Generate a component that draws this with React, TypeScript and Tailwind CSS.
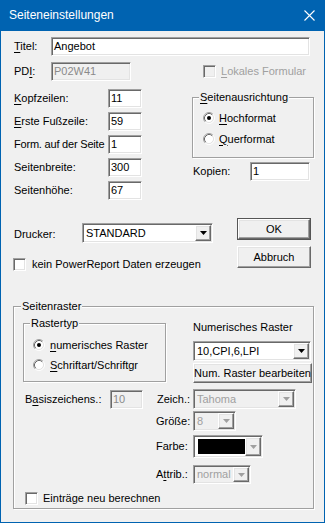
import React from "react";

const sunken =
  "border border-t-[#a0a0a0] border-l-[#a0a0a0] border-b-white border-r-white shadow-[inset_1px_1px_0_#696969,inset_-1px_-1px_0_#e3e3e3]";
const raised =
  "border border-t-white border-l-white border-b-[#696969] border-r-[#696969] shadow-[inset_-1px_-1px_0_#a0a0a0,inset_1px_1px_0_#e3e3e3] bg-[#f0f0f0]";
const etched =
  "relative border border-[#a0a0a0] shadow-[inset_1px_1px_0_#ffffff,1px_1px_0_#ffffff]";

function U({ children }: { children: React.ReactNode }) {
  return <span className="underline underline-offset-[2px]">{children}</span>;
}

function Field({
  className,
  text,
  disabled,
}: {
  className: string;
  text: string;
  disabled?: boolean;
}) {
  return (
    <div
      className={`${sunken} ${className} ${
        disabled ? "bg-[#f0f0f0] text-[#8a8a8a]" : "bg-white text-black"
      } flex items-center p-[1px] pl-[2px] shrink-0`}
    >
      <span className="leading-[13px]">{text}</span>
    </div>
  );
}

function Arrow({ disabled }: { disabled?: boolean }) {
  return (
    <svg width="7" height="4" viewBox="0 0 7 4">
      <path d="M0 0h7L3.5 4z" fill={disabled ? "#a0a0a0" : "#000"} />
    </svg>
  );
}

function Combo({
  className,
  text,
  disabled,
  arrowDisabled,
  children,
}: {
  className: string;
  text?: string;
  disabled?: boolean;
  arrowDisabled?: boolean;
  children?: React.ReactNode;
}) {
  return (
    <div
      className={`${sunken} ${className} ${
        disabled ? "bg-[#f0f0f0] text-[#a0a0a0]" : "bg-white text-black"
      } flex items-stretch p-[1px] shrink-0`}
    >
      <div className="flex-1 flex items-center pl-[2px] overflow-hidden whitespace-nowrap">
        {children ?? <span className="leading-[13px]">{text}</span>}
      </div>
      <div className={`${raised} w-[16px] flex items-center justify-center`}>
        <Arrow disabled={arrowDisabled ?? disabled} />
      </div>
    </div>
  );
}

function Check({ disabled }: { disabled?: boolean }) {
  return (
    <div
      className={`${sunken} w-[13px] h-[13px] shrink-0 ${
        disabled ? "bg-[#f0f0f0]" : "bg-white"
      }`}
    />
  );
}

function Radio({ checked }: { checked?: boolean }) {
  return (
    <svg width="12" height="12" viewBox="0 0 12 12" className="shrink-0">
      <circle cx="6" cy="6" r="4.2" fill="#fff" />
      <path d="M2.11 9.89A5.5 5.5 0 0 1 9.89 2.11" stroke="#a0a0a0" fill="none" />
      <path d="M9.89 2.11A5.5 5.5 0 0 1 2.11 9.89" stroke="#ffffff" fill="none" />
      <path d="M2.82 9.18A4.5 4.5 0 0 1 9.18 2.82" stroke="#696969" fill="none" />
      <path d="M9.18 2.82A4.5 4.5 0 0 1 2.82 9.18" stroke="#e3e3e3" fill="none" />
      {checked && <circle cx="6" cy="6" r="2" fill="#000" />}
    </svg>
  );
}

function Legend({ children, className }: { children: React.ReactNode; className: string }) {
  return (
    <span className={`absolute -top-[7px] ${className} bg-[#f0f0f0] px-[1px] leading-[13px]`}>
      {children}
    </span>
  );
}

export default function App() {
  return (
    <div className="w-[325px] h-[523px] bg-[#0063b1] px-[1px] pb-[1px] font-['Liberation_Sans',Arial,sans-serif] text-[11px] leading-[13px] text-black select-none">
      {/* Title bar */}
      <div className="h-[31px] flex items-center justify-between pl-[8px] pr-[9px] text-white">
        <span className="text-[12px] leading-[15px]">Seiteneinstellungen</span>
        <svg width="11" height="11" viewBox="0 0 11 11">
          <path d="M0.5 0.5L10.5 10.5M10.5 0.5L0.5 10.5" stroke="#fff" strokeWidth="1.1" />
        </svg>
      </div>

      {/* Client */}
      <div className="h-[491px] bg-[#f0f0f0] pl-[13px] pt-[6px] flex flex-col">
        {/* Titel */}
        <div className="flex items-center h-[19px]">
          <span className="w-[37px] shrink-0">
            <U>T</U>itel:
          </span>
          <Field className="w-[259px] h-[19px]" text="Angebot" />
        </div>

        {/* PDI */}
        <div className="flex items-center h-[19px] mt-[6px]">
          <span className="w-[37px] shrink-0">
            PD<U>I</U>:
          </span>
          <Field className="w-[80px] h-[19px]" text="P02W41" disabled />
          <div className="ml-[72px] flex items-center">
            <Check disabled />
            <span className="ml-[5px] text-[#a0a0a0]">
              <U>L</U>okales Formular
            </span>
          </div>
        </div>

        {/* Middle section */}
        <div className="flex mt-[8px]">
          <div className="flex flex-col gap-[4px]">
            {[
              [<><U>K</U>opfzeilen:</>, "11"],
              [<><U>E</U>rste Fußzeile:</>, "59"],
              [<span className="tracking-[-0.2px]">Form. auf der Seite</span>, "1"],
              [<>Seitenbreite:</>, "300"],
              [<>Seitenhöhe:</>, "67"],
            ].map(([label, val], i) => (
              <div key={i} className="flex items-center h-[19px]">
                <span className="w-[94px] shrink-0 whitespace-nowrap">{label}</span>
                <Field className="w-[34px] h-[19px]" text={val as string} />
              </div>
            ))}
          </div>
          <div className="ml-[50px] mt-[8px] flex flex-col">
            <div className={`${etched} w-[122px] h-[61px] flex flex-col pt-[13px] pl-[10px] gap-[7px]`}>
              <Legend className="left-[6px]">
                <U>S</U>eitenausrichtung
              </Legend>
              <div className="flex items-center h-[14px] gap-[4px]">
                <Radio checked />
                <span>
                  <U>H</U>ochformat
                </span>
              </div>
              <div className="flex items-center h-[14px] gap-[4px]">
                <Radio />
                <span>
                  <U>Q</U>uerformat
                </span>
              </div>
            </div>
            <div className="flex items-center mt-[4px] ml-[1px] h-[19px]">
              <span className="w-[57px] shrink-0">Kopien:</span>
              <Field className="w-[60px] h-[19px]" text="1" />
            </div>
          </div>
        </div>

        {/* Drucker + buttons */}
        <div className="flex mt-[18px]">
          <div className="w-[223px] flex flex-col">
            <div className="flex items-center mt-[5px] h-[20px]">
              <span className="w-[68px] shrink-0 pt-[3px]">Drucker:</span>
              <Combo className="w-[131px] h-[20px]" text="STANDARD" />
            </div>
            <div className="flex items-center mt-[15px] h-[13px] -ml-[1px]">
              <Check />
              <span className="ml-[6px]">kein PowerReport Daten erzeugen</span>
            </div>
          </div>
          <div className="flex flex-col w-[74px]">
            <div className="border border-[#555] h-[22px] flex">
              <div className={`${raised} flex-1 flex items-center justify-center`}>OK</div>
            </div>
            <div className={`${raised} h-[22px] mt-[6px] flex items-center justify-center`}>
              Abbruch
            </div>
          </div>
        </div>

        {/* Seitenraster */}
        <div className={`${etched} -ml-[1px] mt-[35px] w-[301px] h-[203px] flex flex-col`}>
          <Legend className="left-[7px]">Seitenraster</Legend>
          <div className="flex">
            <div
              className={`${etched} ml-[9px] mt-[16px] w-[143px] h-[59px] flex flex-col pt-[14px] pl-[9px] gap-[6px]`}
            >
              <Legend className="left-[6px]">Rastertyp</Legend>
              <div className="flex items-center h-[14px] gap-[5px]">
                <Radio checked />
                <span>
                  <U>n</U>umerisches Raster
                </span>
              </div>
              <div className="flex items-center h-[14px] gap-[5px]">
                <Radio />
                <span>
                  <U>S</U>chriftart/Schriftgr
                </span>
              </div>
            </div>
            <div className="ml-[27px] mt-[13px] flex flex-col">
              <span className="h-[14px] leading-[14px]">Numerisches Raster</span>
              <Combo className="mt-[7px] w-[118px] h-[20px]" text="10,CPI,6,LPI" />
              <div className={`${raised} mt-[2px] w-[119px] h-[20px] flex items-center justify-center whitespace-nowrap`}>
                Num. Raster bearbeiten
              </div>
            </div>
          </div>

          <div className="flex items-center mt-[6px] pl-[11px] h-[20px]">
            <span className="w-[85px] shrink-0">
              B<U>a</U>siszeichens.:
            </span>
            <Field className="w-[33px] h-[19px]" text="10" disabled />
            <span className="ml-[14px] w-[36px] shrink-0">Zeich.:</span>
            <Combo className="w-[103px] h-[20px]" text="Tahoma" disabled />
          </div>

          <div className="flex items-center mt-[2px] pl-[142px] h-[20px]">
            <span className="w-[37px] shrink-0">Größe:</span>
            <Combo className="w-[43px] h-[20px]" text="8" disabled />
          </div>

          <div className="flex items-center mt-[4px] pl-[142px] h-[23px]">
            <span className="w-[37px] shrink-0">Farbe:</span>
            <Combo className="w-[70px] h-[23px]" arrowDisabled>
              <div className="w-[47px] h-[15px] bg-black ml-[1px]" />
            </Combo>
          </div>

          <div className="flex items-center mt-[7px] pl-[142px] h-[19px]">
            <span className="w-[37px] shrink-0">
              A<U>t</U>trib.:
            </span>
            <Combo className="w-[58px] h-[19px]" text="normal" disabled />
          </div>

          <div className="flex items-center mt-[8px] pl-[11px] h-[13px]">
            <Check />
            <span className="ml-[5px]">Einträge neu berechnen</span>
          </div>
        </div>
      </div>
    </div>
  );
}
